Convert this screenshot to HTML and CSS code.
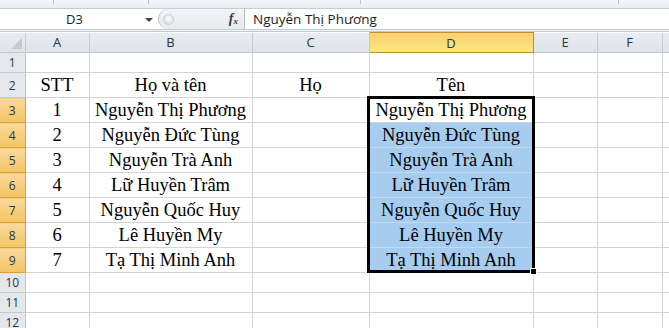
FILE: index.html
```html
<!DOCTYPE html>
<html lang="vi">
<head>
    <meta charset="UTF-8">
    <title>Book1 - Excel</title>
    <link rel="stylesheet" href="styles.css">
</head>
<body>
    <!-- Ribbon edge -->
    <div class="ribbon-edge">
        <span class="rib-sep s1"></span>
        <span class="rib-sep s2"></span>
        <span class="rib-sep s3"></span>
        <span class="rib-sep s4"></span>
    </div>

    <!-- Formula bar -->
    <div class="formula-bar">
        <div class="name-box">
            <span class="name-text">D3</span>
            <span class="name-arrow"></span>
        </div>
        <div class="fx-area">
            <span class="knob"></span>
            <span class="fx">f<sub>x</sub></span>
        </div>
        <div class="formula-input">Nguyễn Thị Phương</div>
    </div>
    <div class="bar-gap"></div>

    <!-- Sheet -->
    <div class="sheet">
        <table class="grid">
            <colgroup>
                <col class="c-rh">
                <col class="c-a">
                <col class="c-b">
                <col class="c-c">
                <col class="c-d">
                <col class="c-e">
                <col class="c-f">
                <col class="c-g">
            </colgroup>
            <tr class="col-heads">
                <th class="corner"><span class="corner-tri"></span></th>
                <th>A</th><th>B</th><th>C</th><th class="active">D</th><th>E</th><th>F</th><th></th>
            </tr>
            <tr class="short"><th>1</th><td></td><td></td><td></td><td></td><td></td><td></td><td></td></tr>
            <tr><th>2</th><td>STT</td><td>Họ và tên</td><td>Họ</td><td>Tên</td><td></td><td></td><td></td></tr>
            <tr><th class="active">3</th><td>1</td><td>Nguyễn Thị Phương</td><td></td><td class="cur">Nguyễn Thị Phương</td><td></td><td></td><td></td></tr>
            <tr><th class="active">4</th><td>2</td><td>Nguyễn Đức Tùng</td><td></td><td class="sel">Nguyễn Đức Tùng</td><td></td><td></td><td></td></tr>
            <tr><th class="active">5</th><td>3</td><td>Nguyễn Trà Anh</td><td></td><td class="sel">Nguyễn Trà Anh</td><td></td><td></td><td></td></tr>
            <tr><th class="active">6</th><td>4</td><td>Lữ Huyền Trâm</td><td></td><td class="sel">Lữ Huyền Trâm</td><td></td><td></td><td></td></tr>
            <tr><th class="active">7</th><td>5</td><td>Nguyễn Quốc Huy</td><td></td><td class="sel">Nguyễn Quốc Huy</td><td></td><td></td><td></td></tr>
            <tr><th class="active">8</th><td>6</td><td>Lê Huyền My</td><td></td><td class="sel">Lê Huyền My</td><td></td><td></td><td></td></tr>
            <tr><th class="active">9</th><td>7</td><td>Tạ Thị Minh Anh</td><td></td><td class="sel">Tạ Thị Minh Anh</td><td></td><td></td><td></td></tr>
            <tr class="short"><th>10</th><td></td><td></td><td></td><td></td><td></td><td></td><td></td></tr>
            <tr class="short"><th>11</th><td></td><td></td><td></td><td></td><td></td><td></td><td></td></tr>
            <tr class="short"><th>12</th><td></td><td></td><td></td><td></td><td></td><td></td><td></td></tr>
        </table>

        <!-- Selection frame over D3:D9 -->
        <div class="selection">
            <span class="fill-handle"></span>
        </div>
    </div>
</body>
</html>
```

FILE: styles.css
```css
* {
    margin: 0;
    padding: 0;
    box-sizing: border-box;
}

body {
    width: 669px;
    height: 328px;
    overflow: hidden;
    background-color: #fff;
    font-family: "Liberation Sans", Arial, sans-serif;
}

/* Ribbon edge */
.ribbon-edge {
    position: relative;
    height: 9px;
    background: linear-gradient(#f3f5f8, #e9edf2);
    border-bottom: 1px solid #c5ccd6;
}

.rib-sep {
    position: absolute;
    top: 0;
    width: 1px;
    height: 4px;
    background-color: #b9c2cd;
}
.s1 { left: 53px; }
.s2 { left: 148px; }
.s3 { left: 360px; }
.s4 { left: 618px; }

/* Formula bar */
.formula-bar {
    display: flex;
    height: 20px;
    background-color: #fff;
}

.name-box {
    width: 158px;
    display: flex;
    align-items: center;
    position: relative;
    font-family: "Open Sans", sans-serif;
    font-size: 13px;
    color: #1e1e1e;
}

.name-text {
    flex: 1;
    text-align: center;
    padding-left: 4px;
}

.name-arrow {
    width: 0;
    height: 0;
    border-left: 4px solid transparent;
    border-right: 4px solid transparent;
    border-top: 4px solid #444;
    margin-right: 5px;
    margin-top: 1px;
}

.fx-area {
    width: 87px;
    display: flex;
    align-items: center;
    justify-content: space-between;
    padding: 0 6px 0 4px;
    background: linear-gradient(#f2f4f7, #e6e9ee);
    border-left: 1px solid #b6bdc7;
    border-right: 1px solid #b6bdc7;
    border-radius: 10px 0 0 10px;
}

.knob {
    width: 11px;
    height: 11px;
    border-radius: 50%;
    background: radial-gradient(circle at 50% 40%, #fdfdfd, #d2d6dc);
    border: 1px solid #c8cdd4;
}

.fx {
    font-family: "Liberation Serif", serif;
    font-style: italic;
    font-weight: bold;
    font-size: 14px;
    color: #3c3c3c;
}
.fx sub {
    font-size: 9px;
    vertical-align: -1px;
}

.formula-input {
    flex: 1;
    padding-left: 8px;
    font-family: "Open Sans", sans-serif;
    font-size: 13.5px;
    line-height: 20px;
    color: #1e1e1e;
}

.bar-gap {
    height: 3px;
    border-top: 1px solid #c2c8d0;
    border-bottom: 1px solid #c2c8d0;
    background-color: #f1f3f6;
}

/* Sheet */
.sheet {
    position: relative;
}

.grid {
    border-collapse: collapse;
    table-layout: fixed;
    width: 700px;
}

.c-rh { width: 25px; }
.c-a { width: 64px; }
.c-b { width: 163px; }
.c-c { width: 117px; }
.c-d { width: 164px; }
.c-e { width: 64px; }
.c-f { width: 65px; }
.c-g { width: 38px; }

.grid tr {
    height: 25px;
}
.grid tr.short {
    height: 20px;
}
.grid tr.col-heads {
    height: 20px;
}

.grid th {
    background-color: #e4e7ec;
    border-right: 1px solid #c4c9d1;
    border-bottom: 1px solid #c4c9d1;
    font-weight: normal;
    font-family: "Open Sans", sans-serif;
    font-size: 12px;
    color: #27364a;
    text-align: center;
    padding: 0;
}

.col-heads th {
    background: linear-gradient(#e8ebef, #dfe3e8);
    font-size: 13px;
}

.grid th.active {
    background: linear-gradient(#f9d99a, #f3c462);
    border-color: #d8a03c;
}
.col-heads th.active {
    background: linear-gradient(#f8d16f, #fde77f);
    border: 1px solid #c48b2e;
}

.corner {
    position: relative;
}
.corner-tri {
    position: absolute;
    right: 3px;
    bottom: 3px;
    width: 0;
    height: 0;
    border-left: 11px solid transparent;
    border-bottom: 11px solid #c5cad1;
}

.grid td {
    border-right: 1px solid #d4d4d4;
    border-bottom: 1px solid #d4d4d4;
    font-family: "Liberation Serif", serif;
    font-size: 18.5px;
    color: #000;
    text-align: center;
    vertical-align: bottom;
    padding: 0;
    line-height: 23px;
    white-space: nowrap;
    overflow: hidden;
}

.grid td.sel {
    background-color: #a6cdf0;
    border-bottom-color: #c9d9ea;
}

.selection {
    position: absolute;
    left: 367px;
    top: 64px;
    width: 168px;
    height: 177px;
    border: 3px solid #000;
    pointer-events: none;
}

.fill-handle {
    position: absolute;
    right: -5px;
    bottom: -5px;
    width: 7px;
    height: 7px;
    background-color: #000;
    border: 1px solid #fff;
}
```
